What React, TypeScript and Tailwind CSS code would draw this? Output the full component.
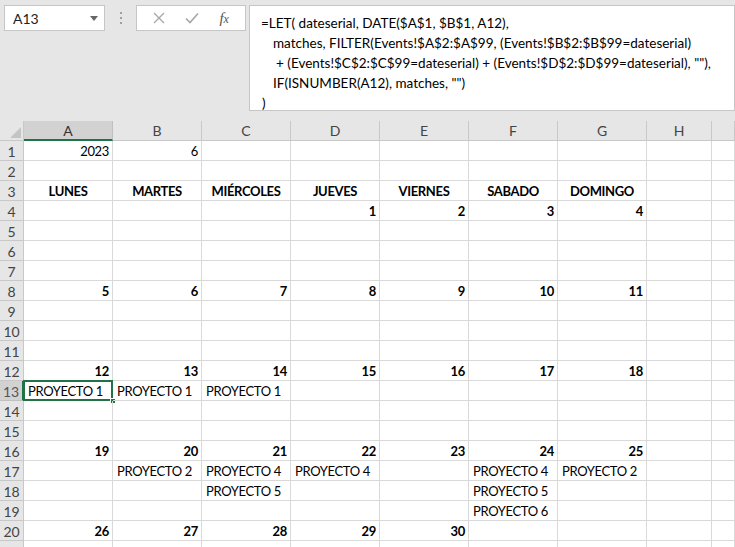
import { ReactNode } from 'react';

const COLS = ['A', 'B', 'C', 'D', 'E', 'F', 'G', 'H', ''];

type Cell = { v: string; kind?: 'num' | 'day' | 'text' | 'plain' };

const DAYS = ['LUNES', 'MARTES', 'MIÉRCOLES', 'JUEVES', 'VIERNES', 'SABADO', 'DOMINGO'];

// filas de la hoja: índice de columna -> contenido
const rows: Record<number, Record<number, Cell>> = {
  1: { 0: { v: '2023', kind: 'plain' }, 1: { v: '6', kind: 'plain' } },
  3: Object.fromEntries(DAYS.map((d, i) => [i, { v: d, kind: 'day' }])),
  4: { 3: { v: '1', kind: 'num' }, 4: { v: '2', kind: 'num' }, 5: { v: '3', kind: 'num' }, 6: { v: '4', kind: 'num' } },
  8: Object.fromEntries([5, 6, 7, 8, 9, 10, 11].map((n, i) => [i, { v: String(n), kind: 'num' }])),
  12: Object.fromEntries([12, 13, 14, 15, 16, 17, 18].map((n, i) => [i, { v: String(n), kind: 'num' }])),
  13: { 0: { v: 'PROYECTO 1' }, 1: { v: 'PROYECTO 1' }, 2: { v: 'PROYECTO 1' } },
  16: Object.fromEntries([19, 20, 21, 22, 23, 24, 25].map((n, i) => [i, { v: String(n), kind: 'num' }])),
  17: { 1: { v: 'PROYECTO 2' }, 2: { v: 'PROYECTO 4' }, 3: { v: 'PROYECTO 4' }, 5: { v: 'PROYECTO 4' }, 6: { v: 'PROYECTO 2' } },
  18: { 2: { v: 'PROYECTO 5' }, 5: { v: 'PROYECTO 5' } },
  19: { 5: { v: 'PROYECTO 6' } },
  20: Object.fromEntries([26, 27, 28, 29, 30].map((n, i) => [i, { v: String(n), kind: 'num' }])),
};

function CellView({ cell, selected }: { cell?: Cell; selected?: boolean }) {
  let content: ReactNode = null;
  if (cell) {
    if (cell.kind === 'num') content = <span className="block text-right font-bold pr-[3px]">{cell.v}</span>;
    else if (cell.kind === 'plain') content = <span className="block text-right pr-[3px]">{cell.v}</span>;
    else if (cell.kind === 'day') content = <span className="block text-center font-bold">{cell.v}</span>;
    else content = <span className="block pl-[4px] whitespace-nowrap">{cell.v}</span>;
  }
  return (
    <div className="relative h-5 border-r border-b border-[#d9d9d9] leading-[21px] overflow-visible">
      {content}
      {selected && (
        <>
          <div className="absolute -left-px -top-px -right-px -bottom-px border-2 border-[#217346] pointer-events-none" />
          <div className="absolute -right-[4px] -bottom-[4px] w-[6px] h-[6px] bg-[#217346] border border-white" />
        </>
      )}
    </div>
  );
}

export default function App() {
  const rowNums = Array.from({ length: 21 }, (_, i) => i + 1);
  return (
    <div className="w-[735px] h-[547px] overflow-hidden bg-white text-black" style={{ fontFamily: 'Lato, "Open Sans", sans-serif' }}>
      {/* barra de fórmulas */}
      <div className="h-[121px] bg-[#e6e6e6] flex items-start pt-[5px] pl-[4px]">
        <div className="w-[101px] h-[26px] bg-white border border-[#c6c6c6] flex items-center justify-between pl-[8px] pr-[6px] text-[14px] text-[#222]">
          <span>A13</span>
          <svg width="8" height="5" viewBox="0 0 8 5"><path d="M0 0h8L4 5z" fill="#666" /></svg>
        </div>
        <div className="w-[31px] h-[26px] flex flex-col items-center justify-center gap-[3px]">
          <div className="w-[2px] h-[2px] bg-[#a0a0a0]" />
          <div className="w-[2px] h-[2px] bg-[#a0a0a0]" />
          <div className="w-[2px] h-[2px] bg-[#a0a0a0]" />
        </div>
        <div className="w-[110px] h-[26px] bg-white border border-[#c6c6c6] flex items-center justify-around px-[6px]">
          <svg width="12" height="12" viewBox="0 0 12 12"><path d="M1 1l10 10M11 1L1 11" stroke="#a6a6a6" strokeWidth="1.3" /></svg>
          <svg width="14" height="12" viewBox="0 0 14 12"><path d="M1 6.5l4 4L13 1.5" stroke="#a6a6a6" strokeWidth="1.6" fill="none" /></svg>
          <span className="italic text-[15px] text-[#555]" style={{ fontFamily: '"Liberation Serif", serif' }}>f<span className="text-[12px]">x</span></span>
        </div>
        <div className="ml-[3px] flex-1 h-[106px] bg-white border border-[#c6c6c6] pl-[11px] pt-[7px] text-[13.5px] leading-[20px] whitespace-pre">
          <div>=LET( dateserial, DATE($A$1, $B$1, A12),</div>
          <div className="pl-[12px]">matches, FILTER(Events!$A$2:$A$99, (Events!$B$2:$B$99=dateserial)</div>
          <div className="pl-[15px]">+ (Events!$C$2:$C$99=dateserial) + (Events!$D$2:$D$99=dateserial), ""),</div>
          <div className="pl-[12px]">IF(ISNUMBER(A12), matches, "")</div>
          <div className="pl-[1px]">)</div>
        </div>
      </div>

      {/* hoja */}
      <div className="grid grid-cols-[24px_repeat(7,89px)_65px_1fr] text-[13px] tracking-[-0.35px]">
        {/* esquina */}
        <div className="h-5 bg-[#e6e6e6] border-r border-b border-[#c8c8c8] flex items-end justify-end p-[2px]">
          <svg width="11" height="11" viewBox="0 0 11 11"><path d="M11 0v11H0z" fill="#c4c4c4" /></svg>
        </div>
        {COLS.map((c, i) => (
          <div
            key={'h' + i}
            className={
              i === 0
                ? 'h-5 bg-[#d2d2d2] border-r border-[#c0c0c0] border-b-2 border-b-[#217346] text-center leading-[19px] text-[#333] text-[14px] tracking-normal'
                : 'h-5 bg-[#e6e6e6] border-r border-b border-[#c8c8c8] text-center leading-[19px] text-[#444] text-[14px] tracking-normal'
            }
          >
            {c}
          </div>
        ))}
        {rowNums.map((r) => (
          <Row key={r} r={r} />
        ))}
      </div>
    </div>
  );
}

function Row({ r }: { r: number }) {
  const data = rows[r] || {};
  const sel = r === 13;
  return (
    <>
      <div
        className={
          sel
            ? 'h-5 bg-[#d2d2d2] border-r-2 border-r-[#217346] border-b border-[#c0c0c0] text-center leading-[21px] text-[#555] text-[14px] tracking-normal'
            : 'h-5 bg-[#e6e6e6] border-r border-b border-[#c8c8c8] text-center leading-[21px] text-[#444] text-[14px] tracking-normal'
        }
      >
        {r}
      </div>
      {COLS.map((_, i) => (
        <CellView key={i} cell={data[i]} selected={sel && i === 0} />
      ))}
    </>
  );
}
